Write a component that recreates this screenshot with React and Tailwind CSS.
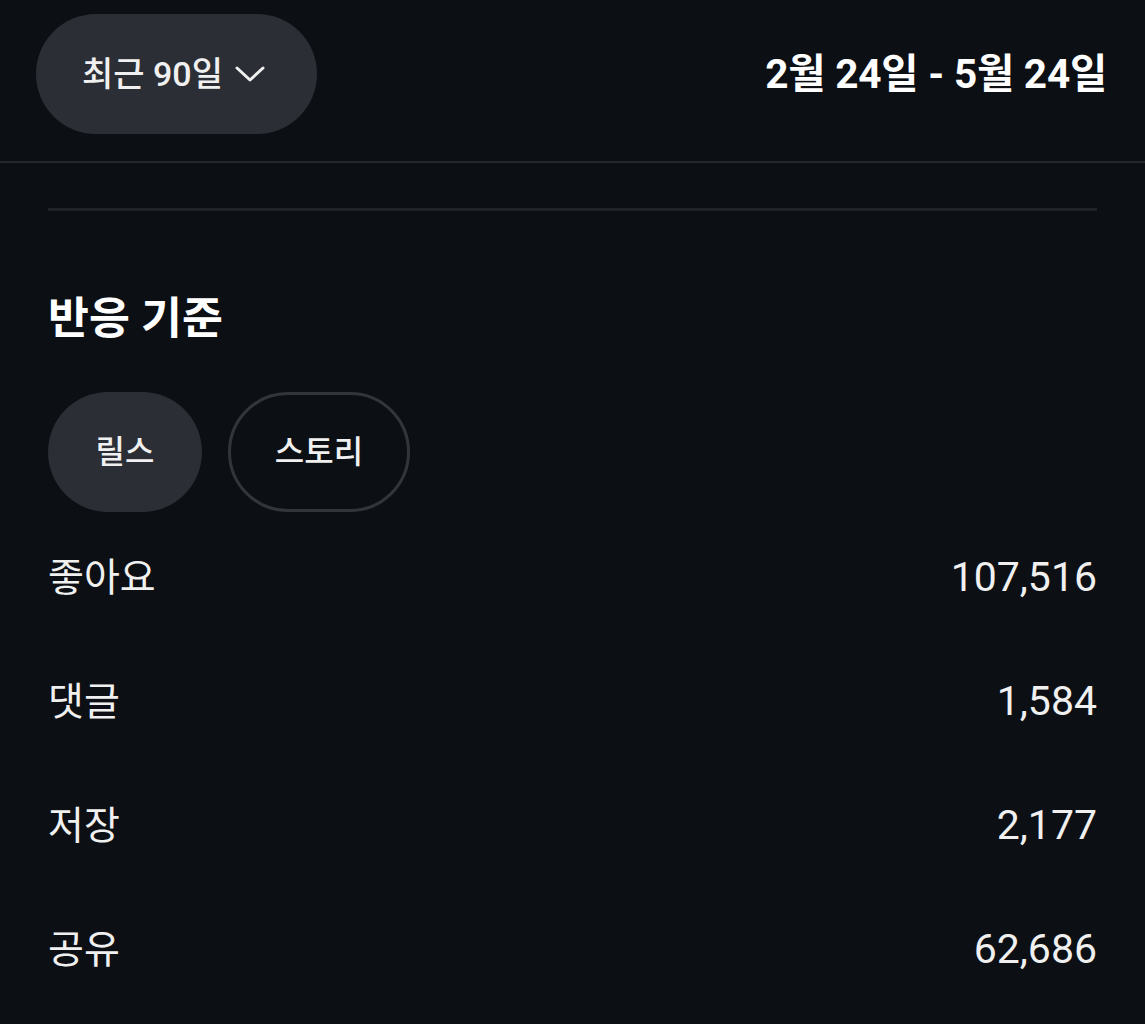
import React from "react";

const rows = [
  ["좋아요", "107,516"],
  ["댓글", "1,584"],
  ["저장", "2,177"],
  ["공유", "62,686"],
];

export default function App() {
  return (
    <div className="min-h-[1024px] w-full bg-[#0c0f14] text-[#f4f4f5] font-['Roboto','Noto_Sans_CJK_KR',sans-serif]">
      <div className="flex h-[163px] items-center justify-between border-b-[2px] border-[#24272b] pb-[13px] pl-[36px] pr-[38px]">
        <button className="flex h-[120px] w-[281px] items-center justify-center gap-[12px] rounded-full bg-[#2b2f35] pr-[6px] text-[34px] font-medium text-[#f0f0f0]">
          <span>최근 90일</span>
          <svg width="30" height="18" viewBox="0 0 30 18" fill="none">
            <path d="M2 3 L15 15 L28 3" stroke="#f0f0f0" strokeWidth="3" strokeLinecap="round" strokeLinejoin="round" />
          </svg>
        </button>
        <div className="text-[40.5px] font-bold tracking-[-0.2px] text-white">2월 24일 - 5월 24일</div>
      </div>
      <div className="px-[48px]">
        <div className="mt-[45px] h-[3px] bg-[#1f2226]" />
        <h2 className="mt-[82px] text-[44.5px] font-bold leading-[52px] text-white">반응 기준</h2>
        <div className="mt-[47px] flex gap-[26px]">
          <button className="flex h-[120px] w-[154px] items-center justify-center rounded-full bg-[#2b2f35] text-[32px] font-medium text-[#f0f0f0]">
            릴스
          </button>
          <button className="flex h-[120px] w-[182px] items-center justify-center rounded-full border-[3px] border-[#32363b] text-[32px] font-medium text-[#f0f0f0]">
            스토리
          </button>
        </div>
        <div className="mt-[4px] flex flex-col">
          {rows.map(([k, v]) => (
            <div key={k} className="flex h-[124px] items-center justify-between">
              <span className="text-[39px] text-[#f0f0f0]">{k}</span>
              <span className="text-[41px] text-[#f0f0f0]">{v}</span>
            </div>
          ))}
        </div>
      </div>
    </div>
  );
}
